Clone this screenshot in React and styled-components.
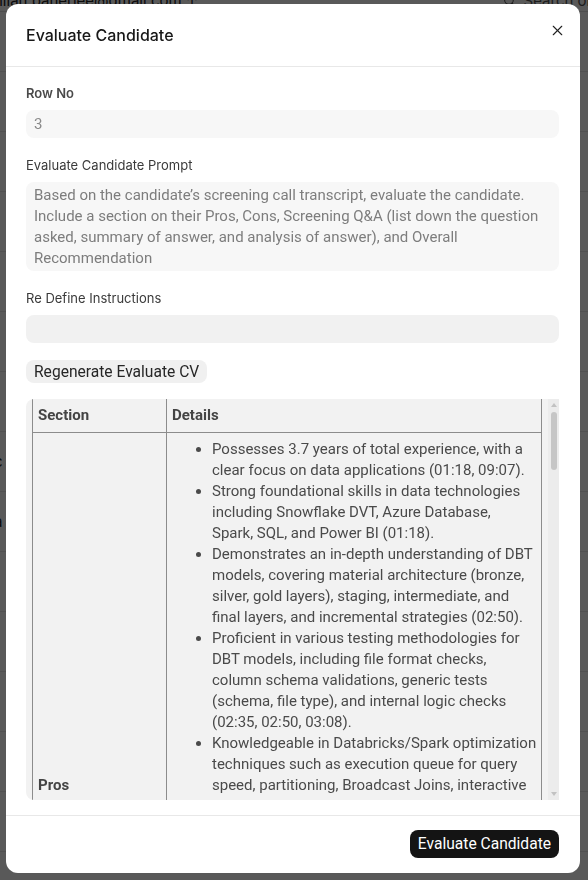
import React from "react";
import styled, { createGlobalStyle } from "styled-components";
import { X, Search } from "lucide-react";

const GlobalStyle = createGlobalStyle`
	* { box-sizing: border-box; }
	html, body { margin: 0; padding: 0; height: 100%; }
	body {
		font-family: Inter, "Noto Sans", sans-serif;
		background: #ffffff;
		overflow: hidden;
	}
`;

const pros = [
	"Possesses 3.7 years of total experience, with a clear focus on data applications (01:18, 09:07).",
	"Strong foundational skills in data technologies including Snowflake DVT, Azure Database, Spark,\u00a0SQL, and Power BI (01:18).",
	"Demonstrates an in-depth understanding of DBT models, covering material architecture (bronze, silver, gold layers), staging, intermediate, and final layers, and incremental strategies (02:50).",
	"Proficient in various testing methodologies for DBT models, including file format checks, column schema validations, generic tests (schema, file type), and internal logic checks (02:35, 02:50, 03:08).",
	"Knowledgeable in Databricks/Spark optimization techniques such as execution queue for query speed, partitioning, Broadcast Joins, interactive clusters, caching, Z-ordering, and Delta file compaction (04:12, 05:03).",
	"Has hands-on experience building ingestion pipelines with Azure Data Factory, including parameterized pipelines, metadata-driven loads and scheduled triggers (05:40).",
	"Communicates clearly and structures answers logically, giving concrete examples from previous projects to support technical claims (06:15, 07:22).",
	"Shows awareness of data governance practices such as role-based access, masking policies and lineage tracking within Snowflake and Unity Catalog (08:10).",
	"Displays a willingness to learn new tools and adapt to changing project requirements (09:30).",
];

const cons = [
	"Limited exposure to streaming workloads; answers on Structured Streaming were mostly theoretical (07:45).",
	"Little experience with CI/CD for data pipelines beyond basic Git workflows (08:30).",
];

const backdropRows = ["", "", "", "", "", "", "", "c", "a", "", "", "", "", "t"];

const App = () => {
	return (
		<>
			<GlobalStyle />
			<Page>
				<TopBar>
					<UserMail>nilan.banerjee@gmail.com ↑</UserMail>
					<SearchBox>
						<Search size={13} strokeWidth={2} />
						<span>Search or type</span>
					</SearchBox>
				</TopBar>
				{backdropRows.map((t, i) => (
					<PageRow key={i}>
						<span>{t}</span>
					</PageRow>
				))}
			</Page>
			<Overlay>
				<Modal>
					<Header>
						<Title>Evaluate Candidate</Title>
						<CloseButton aria-label="Close">
							<X size={17} strokeWidth={1.6} />
						</CloseButton>
					</Header>
					<Body>
						<Field>
							<Label $bold>Row No</Label>
							<Input $tone="light" readOnly value="3" />
						</Field>
						<Field>
							<Label>Evaluate Candidate Prompt</Label>
							<TextArea
								readOnly
								rows={4}
								value="Based on the candidate’s screening call transcript, evaluate the candidate. Include a section on their Pros, Cons, Screening Q&A (list down the question asked, summary of answer, and analysis of answer), and Overall Recommendation"
							/>
						</Field>
						<Field>
							<Label>Re Define Instructions</Label>
							<Input $tone="dark" />
						</Field>
						<div>
							<GhostButton>Regenerate Evaluate CV</GhostButton>
						</div>
						<TableArea>
							<TableScroll>
								<ResultTable>
									<thead>
										<tr>
											<HeadCell $w={134}>Section</HeadCell>
											<HeadCell>Details</HeadCell>
										</tr>
									</thead>
									<tbody>
										<tr>
											<SectionCell>Pros</SectionCell>
											<DetailCell>
												<BulletList>
													{pros.map((p) => (
														<li key={p}>{p}</li>
													))}
												</BulletList>
											</DetailCell>
										</tr>
										<tr>
											<SectionCell>Cons</SectionCell>
											<DetailCell>
												<BulletList>
													{cons.map((p) => (
														<li key={p}>{p}</li>
													))}
												</BulletList>
											</DetailCell>
										</tr>
									</tbody>
								</ResultTable>
							</TableScroll>
							<ScrollRail>
								<Arrow $dir="up" />
								<Thumb />
								<Arrow $dir="down" />
							</ScrollRail>
						</TableArea>
					</Body>
					<Footer>
						<PrimaryButton>Evaluate Candidate</PrimaryButton>
					</Footer>
				</Modal>
			</Overlay>
		</>
	);
};

const Page = styled.div`
	height: 100vh;
	background: #ffffff;
	color: #222;
	font-size: 14px;
`;

const TopBar = styled.div`
	display: flex;
	justify-content: space-between;
	align-items: center;
	height: 18px;
	padding: 0 0 4px;
	margin-top: -6px;
	border-bottom: 1px solid #ddd;
`;

const UserMail = styled.span`
	font-size: 15px;
	margin-left: -6px;
`;

const SearchBox = styled.div`
	display: flex;
	align-items: center;
	gap: 8px;
	font-size: 15px;
	margin-right: -40px;
	color: #555;
`;

const PageRow = styled.div`
	height: 60px;
	display: flex;
	align-items: center;
	border-bottom: 1px solid #e4e4e4;
	font-size: 15px;
	margin-left: -6px;
`;

const Overlay = styled.div`
	position: fixed;
	inset: 0;
	background: rgba(0, 0, 0, 0.65);
	display: flex;
	align-items: flex-start;
	justify-content: flex-start;
	padding: 4px 0 0 6px;
`;

const Modal = styled.div`
	width: 574px;
	height: 869px;
	background: #ffffff;
	border-radius: 12px;
	display: flex;
	flex-direction: column;
	overflow: hidden;
`;

const Header = styled.div`
	display: flex;
	align-items: center;
	justify-content: space-between;
	height: 63px;
	padding: 0 14px 0 20px;
	border-bottom: 1px solid #e8e8e8;
	flex-shrink: 0;
`;

const Title = styled.h2`
	margin: 0;
	font-size: 16px;
	font-weight: 500;
	color: #181818;
`;

const CloseButton = styled.button`
	border: none;
	background: none;
	padding: 0;
	color: #222;
	display: flex;
	margin-top: -10px;
	cursor: pointer;
`;

const Body = styled.div`
	flex: 1;
	min-height: 0;
	display: flex;
	flex-direction: column;
	gap: 19px;
	padding: 18px 21px 15px 20px;
`;

const Field = styled.div`
	display: flex;
	flex-direction: column;
	gap: 8px;
`;

const Label = styled.label`
	font-size: 13px;
	line-height: 17px;
	font-weight: ${({ $bold }) => ($bold ? 600 : 400)};
	color: ${({ $bold }) => ($bold ? "#4a4a4a" : "#3a3a3a")};
`;

const Input = styled.input`
	height: 28px;
	border: none;
	outline: none;
	border-radius: 8px;
	padding: 0 8px;
	font-family: Roboto, sans-serif;
	font-size: 15px;
	color: #8a8a8a;
	background: ${({ $tone }) => ($tone === "dark" ? "#f1f1f1" : "#f7f7f7")};
`;

const TextArea = styled.textarea`
	border: none;
	outline: none;
	resize: none;
	border-radius: 8px;
	padding: 3px 8px 2px;
	height: 89px;
	font-family: Roboto, sans-serif;
	font-size: 15px;
	line-height: 21px;
	color: #7d7d7d;
	background: #f7f7f7;
	overflow: hidden;
`;

const GhostButton = styled.button`
	border: none;
	border-radius: 8px;
	background: #f0f0f0;
	height: 23px;
	padding: 0 8px;
	font-family: Roboto, sans-serif;
	font-size: 15.6px;
	color: #262626;
	margin-top: -2px;
	display: block;
`;

const TableArea = styled.div`
	flex: 1;
	min-height: 0;
	margin-top: -3px;
	display: flex;
	background: #f2f2f2;
	border-radius: 8px 0 0 8px;
	overflow: hidden;
`;

const TableScroll = styled.div`
	flex: 1;
	min-width: 0;
	overflow: hidden;
	padding: 0 6px;
`;

const ScrollRail = styled.div`
	width: 11px;
	flex-shrink: 0;
	background: #ececec;
	display: flex;
	flex-direction: column;
	align-items: center;
	padding: 4px 0 4px;
`;

const Arrow = styled.div`
	width: 0;
	height: 0;
	border-left: 3.5px solid transparent;
	border-right: 3.5px solid transparent;
	${({ $dir }) =>
		$dir === "up"
			? "border-bottom: 4px solid #c2c2c2; margin-bottom: 5px;"
			: "border-top: 4px solid #c2c2c2; margin-top: auto;"}
`;

const Thumb = styled.div`
	width: 6px;
	height: 58px;
	border-radius: 3px;
	background: #c6c6c6;
`;

const ResultTable = styled.table`
	width: 100%;
	border-collapse: collapse;
	font-family: Roboto, sans-serif;
	font-size: 15px;
	line-height: 21px;
	color: #4a4a4a;
`;

const HeadCell = styled.th`
	text-align: left;
	font-weight: 700;
	color: #444;
	padding: 6px 5px;
	width: ${({ $w }) => ($w ? `${$w}px` : "auto")};
	border: 1px solid #8c8c8c;
	border-top: none;
`;

const SectionCell = styled.td`
	font-weight: 700;
	color: #444;
	padding: 6px 5px;
	vertical-align: middle;
	border: 1px solid #8c8c8c;
`;

const DetailCell = styled.td`
	padding: 6px 2px 6px 6px;
	border: 1px solid #8c8c8c;
`;

const BulletList = styled.ul`
	margin: 0;
	padding-left: 39px;
`;

const Footer = styled.div`
	display: flex;
	justify-content: flex-end;
	align-items: center;
	height: 58px;
	padding: 0 21px 0 20px;
	border-top: 1px solid #e8e8e8;
	flex-shrink: 0;
`;

const PrimaryButton = styled.button`
	border: none;
	border-radius: 8px;
	background: #141414;
	color: #ffffff;
	height: 28px;
	padding: 0 8px;
	font-family: Roboto, sans-serif;
	font-size: 15.6px;
	margin-bottom: 1px;
`;

export default App;
